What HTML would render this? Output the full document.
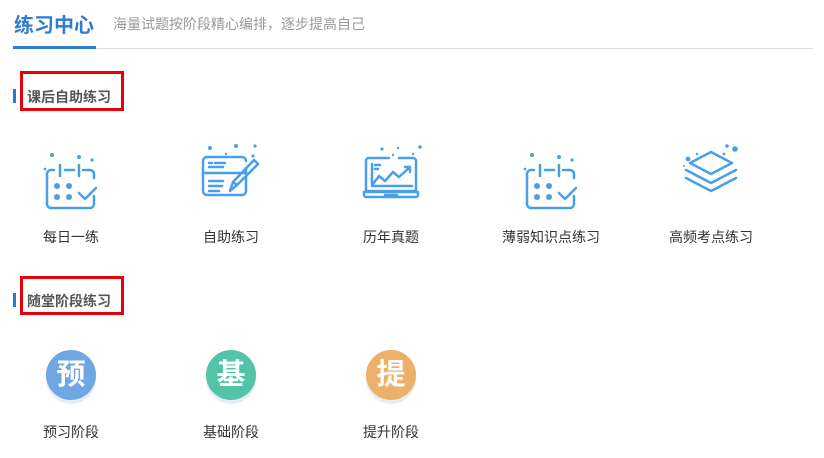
<!DOCTYPE html>
<html><head><meta charset="utf-8"><style>
*{margin:0;padding:0;box-sizing:border-box}
body{width:824px;height:458px;background:#fff;font-family:"Liberation Sans","Noto Sans CJK SC",sans-serif;position:relative;overflow:hidden}
.a{position:absolute;white-space:nowrap}
.lbl{position:absolute;font-size:14px;color:#333;width:140px;text-align:center;top:227px}
.lbl2{top:422px}
.circ{position:absolute;width:50px;height:50px;border-radius:50%;color:#fff;font-size:29px;font-weight:bold;text-align:center;line-height:50px;top:350px;box-shadow:0 4px 0 #e8eef5}
.red{position:absolute;border:3px solid #e8000b;left:20px;width:104px;height:40px}
.bar{position:absolute;left:13px;width:3px;height:14px;background:#1f7fd6}
.sec{position:absolute;left:27px;font-size:14px;font-weight:bold;color:#555}
</style></head><body>
<div class="a" style="left:14px;top:9px;font-size:20px;font-weight:bold;color:#2e7bcf">练习中心</div>
<div class="a" style="left:113px;top:14px;font-size:14px;color:#999">海量试题按阶段精心编排，逐步提高自己</div>
<div class="a" style="left:13px;top:48px;width:800px;height:1px;background:#ddd"></div>
<div class="a" style="left:13px;top:46px;width:83px;height:3px;background:#2e7bcf"></div>

<div class="red" style="top:71px"></div>
<div class="bar" style="top:89px"></div>
<div class="sec" style="top:87px">课后自助练习</div>

<svg class="a" style="left:0;top:0" width="824" height="458" fill="none" stroke="#4a9fe8" stroke-width="2.5" stroke-linecap="round" stroke-linejoin="round">
<g id="cal" transform="translate(30,140)">
<g fill="#4a9fe8" stroke="none"><circle cx="22" cy="15" r="2"/><circle cx="49" cy="17" r="2"/><circle cx="62" cy="20" r="1.6"/><circle cx="15" cy="29" r="1.4"/>
<circle cx="27" cy="46" r="3"/><circle cx="39" cy="46" r="3"/><circle cx="27" cy="57" r="3"/><circle cx="39" cy="57" r="3"/></g>
<path d="M24 30h-3a4 4 0 0 0-4 4v30a4 4 0 0 0 4 4h39a4 4 0 0 0 4-4v-8M55 30h5a4 4 0 0 1 4 4v4"/>
<path d="M30 25v11M49 25v11M35 30h9M53 30h0"/>
<path d="M49 53l6 6 11-11"/>
</g>
<use href="#cal" transform="translate(480,0)"/>
<g transform="translate(190,140)">
<g fill="#4a9fe8" stroke="none"><circle cx="20" cy="8" r="2"/><circle cx="46" cy="6" r="2"/><circle cx="65" cy="6" r="1.6"/><circle cx="36" cy="14" r="1.2"/><circle cx="63" cy="16" r="1.6"/></g>
<path d="M56 28v23a4 4 0 0 1-4 4H17a4 4 0 0 1-4-4V21a4 4 0 0 1 4-4h35a4 4 0 0 1 4 4"/>
<path d="M13 33h43M19 23h3M25 23h10M19 27h14M19 41h14M19 46h5M25 46h7M19 51h10"/>
<path d="M40 51l3-9 21-22 4 4-21 21z M43 42l4 3"/>
</g>
<g transform="translate(350,140)">
<g fill="#4a9fe8" stroke="none"><circle cx="32" cy="9" r="1.6"/><circle cx="48" cy="8" r="1.2"/><circle cx="70" cy="7" r="1.8"/><circle cx="43" cy="15" r="1.2"/><circle cx="63" cy="14" r="1.2"/></g>
<path d="M39 18h-20a3 3 0 0 0-3 3v30h50V21a3 3 0 0 0-3-3h-14M51 18h0M54 18h0"/>
<path d="M14 52h54v3a2 2 0 0 1-2 2H16a2 2 0 0 1-2-2z M35 55h12"/>
<path d="M22 24v22h40M25 25h5M25 29h3M23 44l6-8 6 5 8-9 6 5 11-10M55 27h5v5"/>
</g>
<g transform="translate(680,138)">
<g fill="#4a9fe8" stroke="none"><circle cx="8" cy="21" r="2.4"/><circle cx="47" cy="8" r="1.8"/><circle cx="55" cy="11" r="2.8"/><circle cx="44" cy="16" r="1.4"/><circle cx="17" cy="16" r="1.2"/><circle cx="4" cy="28" r="1"/></g>
<path d="M31 14l21 11-21 11-21-11z"/>
<path d="M6 32l25 13 25-13M6 40l25 13 25-13"/>
</g>
</svg>

<div class="lbl" style="left:1px">每日一练</div>
<div class="lbl" style="left:161px">自助练习</div>
<div class="lbl" style="left:321px">历年真题</div>
<div class="lbl" style="left:481px">薄弱知识点练习</div>
<div class="lbl" style="left:641px">高频考点练习</div>

<div class="red" style="top:276px;height:39px"></div>
<div class="bar" style="top:293px"></div>
<div class="sec" style="top:291px">随堂阶段练习</div>

<div class="circ" style="left:46px;background:#6ea7e4">预</div>
<div class="circ" style="left:206px;background:#53c3aa">基</div>
<div class="circ" style="left:366px;background:#edb068">提</div>
<div class="lbl lbl2" style="left:1px">预习阶段</div>
<div class="lbl lbl2" style="left:161px">基础阶段</div>
<div class="lbl lbl2" style="left:321px">提升阶段</div>
</body></html>
